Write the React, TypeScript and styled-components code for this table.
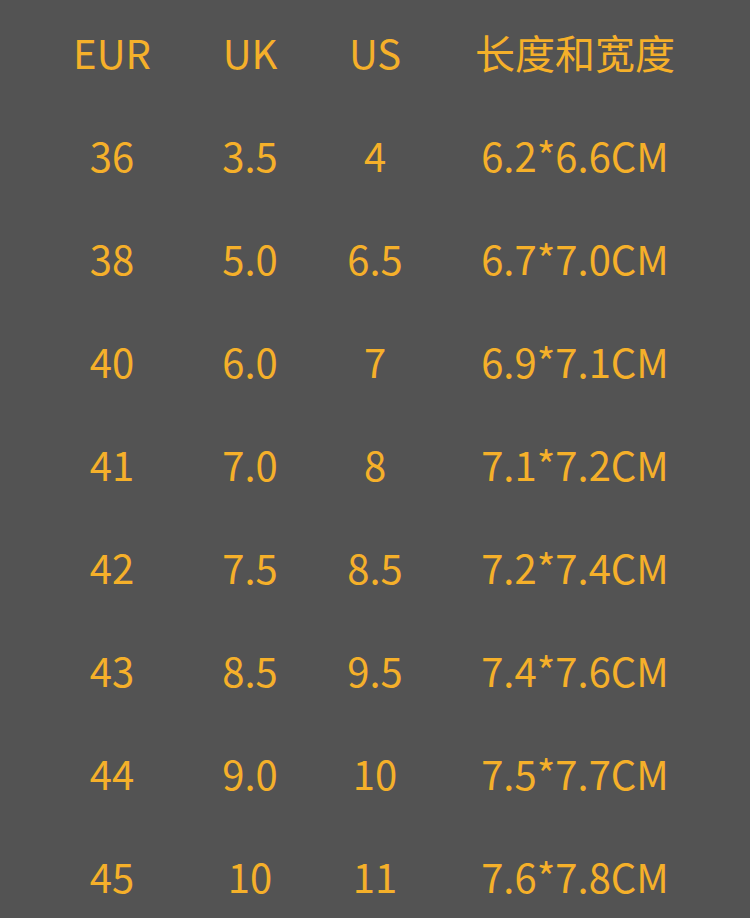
import React from "react";
import styled, { createGlobalStyle } from "styled-components";

const GlobalStyle = createGlobalStyle`
  html, body {
    margin: 0;
    padding: 0;
    background: #535353;
  }
`;

const headers = ["EUR", "UK", "US", "长度和宽度"];

const rows: string[][] = [
  ["36", "3.5", "4", "6.2*6.6CM"],
  ["38", "5.0", "6.5", "6.7*7.0CM"],
  ["40", "6.0", "7", "6.9*7.1CM"],
  ["41", "7.0", "8", "7.1*7.2CM"],
  ["42", "7.5", "8.5", "7.2*7.4CM"],
  ["43", "8.5", "9.5", "7.4*7.6CM"],
  ["44", "9.0", "10", "7.5*7.7CM"],
  ["45", "10", "11", "7.6*7.8CM"],
];

const App = () => {
  return (
    <Page>
      <GlobalStyle />
      <Table>
        {headers.map((h) => (
          <Cell key={h}>{h}</Cell>
        ))}
        {rows.map((row, i) =>
          row.map((value, j) => <Cell key={`${i}-${j}`}>{value}</Cell>)
        )}
      </Table>
    </Page>
  );
};

const Page = styled.div`
  width: 750px;
  height: 918px;
  overflow: hidden;
  background: #535353;
  padding: 0 0 0 42px;
  box-sizing: border-box;
`;

const Table = styled.div`
  display: grid;
  grid-template-columns: 140px 136px 114px 286px;
  grid-auto-rows: 103px;
`;

const Cell = styled.div`
  display: flex;
  align-items: center;
  justify-content: center;
  font-family: "Noto Sans CJK SC", "Noto Sans", sans-serif;
  font-size: 40px;
  line-height: 1;
  color: #f5b02a;
  white-space: nowrap;
`;

export default App;
